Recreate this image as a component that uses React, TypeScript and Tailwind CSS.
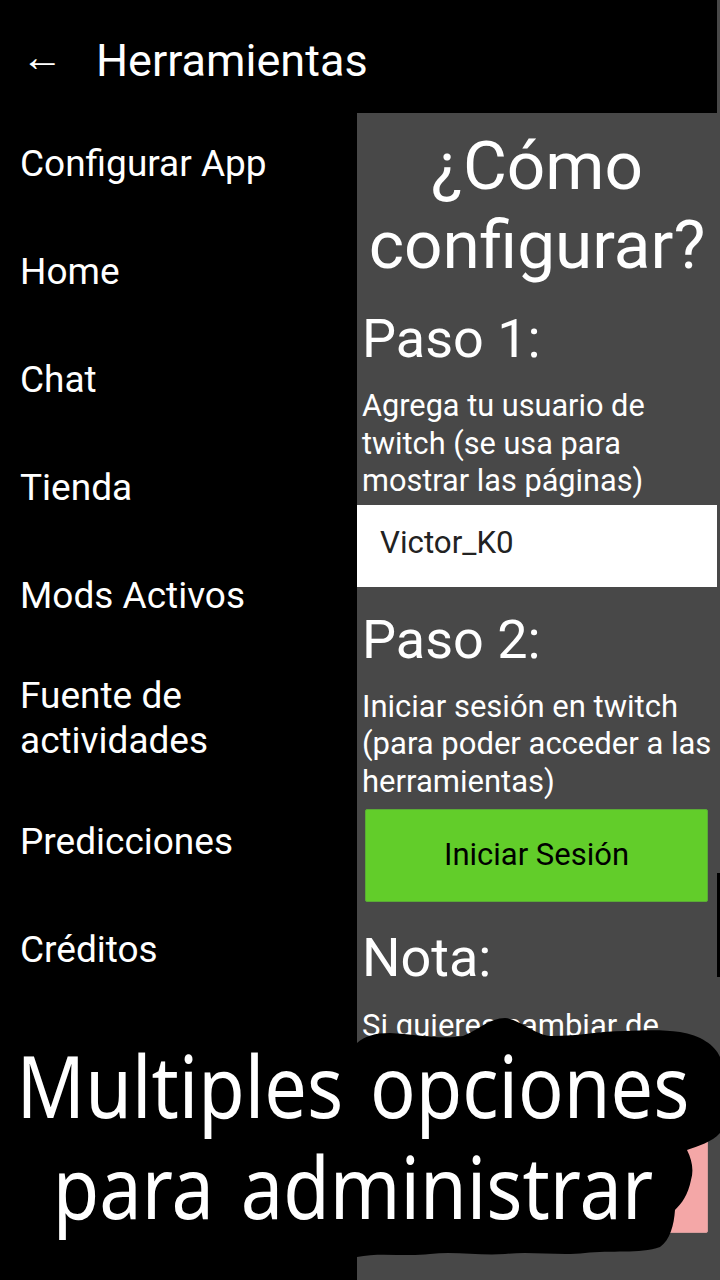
const menu = ['Configurar App', 'Home', 'Chat', 'Tienda', 'Mods Activos', 'Fuente de actividades', 'Predicciones', 'Créditos'];

function CaptionBlob() {
  // hand painted black stroke behind the caption
  return (
    <svg className="absolute left-0 top-[1010px]" width="720" height="260" viewBox="0 1010 720 260">
      <path
        fill="#000"
        d="M0 1045 L357 1043 C365 1036 375 1033 390 1033 C415 1034 440 1040 463 1036 C478 1030 490 1018 505 1018 C520 1019 535 1036 553 1036 C580 1036 600 1031 625 1031 C650 1030 665 1030 680 1032 C700 1035 715 1045 720 1057 L720 1133 C712 1142 698 1146 687 1150 C692 1160 694 1170 691 1180 C688 1195 682 1203 675 1210 C674 1225 670 1240 660 1247 C640 1254 610 1250 585 1253 C560 1256 530 1251 505 1254 C480 1256 455 1251 430 1254 C405 1257 380 1252 357 1257 L0 1257 Z"
      />
    </svg>
  );
}

export default function App() {
  return (
    <div className="relative h-[1280px] w-[720px] overflow-hidden bg-black font-['Roboto',sans-serif] text-white">
      <header className="flex h-[113px] items-center pl-[21px] pt-[7px]">
        <span className="w-[76px] pb-[6px] text-[42px] leading-none">←</span>
        <h1 className="-ml-px text-[45px] leading-none">Herramientas</h1>
      </header>

      <div className="flex h-[1167px]">
        <nav className="flex w-[357px] flex-col gap-[8px] pl-[20px] pr-[60px]">
          {menu.map((item) => (
            <div
              key={item}
              className={`flex items-center text-[37px] leading-[45px] ${item.length > 15 ? 'h-[130px]' : 'h-[100px]'}`}
            >
              {item}
            </div>
          ))}
        </nav>

        <main className="w-[363px] bg-[#484848]">
          <div className="pt-[13px] text-center text-[67.5px] leading-[79px]">
            <div className="w-[360px]">¿Cómo</div>
            <div className="w-[360px]">configurar?</div>
          </div>
          <h2 className="mt-[25px] pl-[5px] text-[54px] leading-[60px]">Paso 1:</h2>
          <p className="mt-[18px] pl-[5px] pr-[8px] text-[30.7px] leading-[37.5px]">
            Agrega tu usuario de twitch (se usa para mostrar las páginas)
          </p>
          <div className="mt-[5px] flex h-[82px] w-[360px] items-center bg-white pb-[4px] pl-[23px] text-[31.3px] text-[#222]">Victor_K0</div>
          <h2 className="mt-[23px] pl-[5px] text-[54px] leading-[60px]">Paso 2:</h2>
          <p className="mt-[18px] pl-[5px] pr-[4px] text-[31px] leading-[37.5px]">
            Iniciar sesión en twitch (para poder acceder a las herramientas)
          </p>
          <button className="ml-[8px] mt-[9px] flex h-[93px] w-[343px] items-center justify-center rounded-[2px] border border-[#5aab36] bg-[#62cd2a] text-[31px] text-black">
            Iniciar Sesión
          </button>
          <h2 className="mt-[26px] pl-[5px] text-[54px] leading-[60px]">Nota:</h2>
          <p className="mt-[19px] pl-[5px] text-[31px] leading-[37.5px]">Si quieres cambiar de</p>
          <div className="ml-[8px] mt-[95px] h-[93px] w-[343px] rounded-[2px] border border-[#d89c9c] bg-[#f4a7a7]" />
        </main>
      </div>

      {/* scrollbar sliver down the right edge */}
      <div className="absolute right-0 top-0 h-[113px] w-[3px] bg-[#484848]" />
      <div className="absolute right-0 top-[873px] h-[104px] w-[3px] bg-black" />
      <CaptionBlob />
      <div className="absolute left-0 top-[1035px] flex w-[706px] scale-x-[0.89] flex-col items-center whitespace-nowrap font-['Noto_Sans',sans-serif] text-[85px] leading-[101px] [word-spacing:8px]">
        <div>Multiples opciones</div>
        <div>para administrar</div>
      </div>
    </div>
  );
}
